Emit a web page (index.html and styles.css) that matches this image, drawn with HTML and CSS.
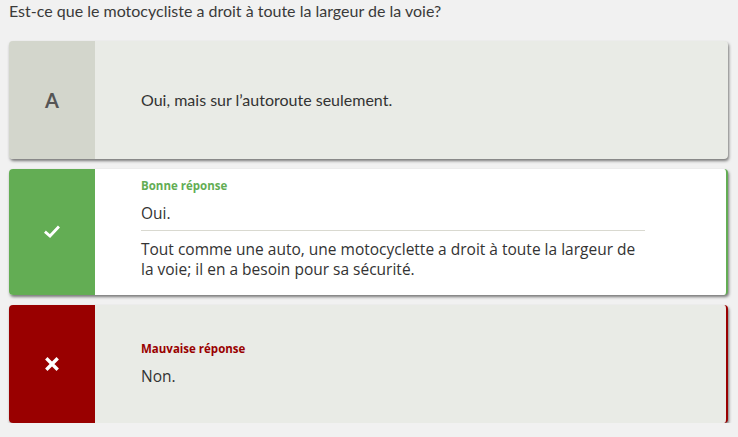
FILE: index.html
```html
<!DOCTYPE html>
<html lang="fr">
<head>
<meta charset="utf-8">
<link rel="stylesheet" href="styles.css">
</head>
<body>
<p class="question">Est-ce que le motocycliste a droit à toute la largeur de la voie?</p>
<div class="answers">
  <div class="card card-neutral">
    <div class="side"><span class="letter">A</span></div>
    <div class="content">
      <p class="answer">Oui, mais sur l’autoroute seulement.</p>
    </div>
  </div>
  <div class="card card-good">
    <div class="side">
      <svg class="icon" width="16" height="14" viewBox="0 0 16 14"><path d="M2 7.5 L6 11 L14 2.5" fill="none" stroke="#fff" stroke-width="2.8" stroke-linecap="square"/></svg>
    </div>
    <div class="content content-good">
      <p class="label label-good">Bonne réponse</p>
      <p class="answer alt">Oui.</p>
      <hr class="sep">
      <p class="explain alt">Tout comme une auto, une motocyclette a droit à toute la largeur de la voie; il en a besoin pour sa sécurité.</p>
    </div>
  </div>
  <div class="card card-bad">
    <div class="side">
      <svg class="icon" width="14" height="14" viewBox="0 0 14 14"><path d="M2.5 2.5 L11.5 11.5 M11.5 2.5 L2.5 11.5" fill="none" stroke="#fff" stroke-width="3.4" stroke-linecap="square"/></svg>
    </div>
    <div class="content">
      <p class="label label-bad">Mauvaise réponse</p>
      <p class="answer alt">Non.</p>
    </div>
  </div>
</div>
</body>
</html>
```
FILE: styles.css
```css
* { box-sizing: border-box; }
html, body { margin: 0; }
body {
  background: #f1f1f1;
  font-family: Lato, "Open Sans", "DejaVu Sans", sans-serif;
  color: #333;
  padding: 0 10px 0 9px;
}
p { margin: 0; }
.question {
  font-size: 16px;
  line-height: 22px;
  color: #3a3a3a;
}
.answers {
  margin-top: 19px;
  display: flex;
  flex-direction: column;
  gap: 10px;
}
.card {
  display: flex;
  min-height: 118px;
  border-radius: 4px;
  overflow: hidden;
  box-shadow: 1px 2px 3px rgba(0,0,0,0.5);
  background: #e9ebe6;
}
.side {
  width: 86px;
  flex: none;
  display: flex;
  align-items: center;
  justify-content: center;
}
.card-neutral .side { background: #d3d6cc; }
.card-good { background: #fff; border-right: 2px solid #63ad54; min-height: 126px; }
.card-good .side { background: #63ad54; }
.card-bad { border-right: 2px solid #990000; }
.card-bad .side { background: #990000; }
.letter {
  font-size: 20px;
  font-weight: 700;
  color: #555;
}
.content {
  flex: 1;
  padding: 10px 81px 10px 46px;
  display: flex;
  flex-direction: column;
  justify-content: center;
}
.content-good { padding: 8px 81px 14px 46px; }
.answer {
  font-size: 16px;
  line-height: 22px;
  color: #333;
}
.alt { font-family: "Open Sans", Lato, sans-serif; font-size: 15.5px; }
.label {
  font-size: 11.5px;
  font-weight: 700;
  line-height: 14px;
  margin-bottom: 9px;
  font-family: "Open Sans", Lato, sans-serif;
}
.label-good { color: #63ad54; }
.label-bad { color: #990000; }
.sep {
  border: 0;
  border-top: 1px solid #d9d9d0;
  margin: 6px 0 8px;
  width: 100%;
}
.explain {
  line-height: 20px;
  color: #333;
}
```
